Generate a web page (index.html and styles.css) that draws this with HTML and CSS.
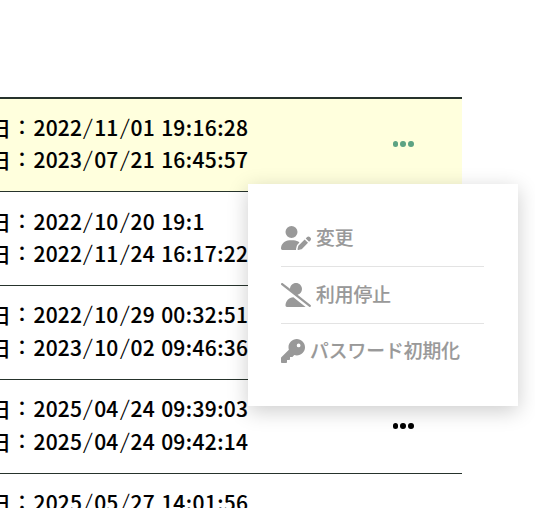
FILE: index.html
```html
<!DOCTYPE html>
<html lang="ja">
<head>
<meta charset="utf-8">
<title>ユーザー一覧</title>
<link rel="stylesheet" href="styles.css">
</head>
<body>
<main class="list">
  <section class="row active">
    <div class="dates">
      <p><span class="day">日</span><span class="sep">：</span>2022<i>/</i>11<i>/</i>01<s></s>19<b>:</b>16<b>:</b>28</p>
      <p><span class="day">日</span><span class="sep">：</span>2023<i>/</i>07<i>/</i>21<s></s>16<b>:</b>45<b>:</b>57</p>
    </div>
    <div class="dots"><span></span><span></span><span></span></div>
    <div class="menu">
      <div class="item">
        <svg class="wide" viewBox="0 0 640 512"><path d="M224 256A128 128 0 1 0 224 0a128 128 0 1 0 0 256zm-45.7 48C79.8 304 0 383.8 0 482.3C0 498.7 13.3 512 29.7 512H322.8c-3.1-8.8-3.7-18.4-1.4-27.8l15-60.1c2.8-11.3 8.6-21.5 16.8-29.7l40.3-40.3c-32.1-31-75.7-50.1-123.9-50.1H178.3zm435.5-68.3c-15.6-15.6-40.9-15.6-56.6 0l-29.4 29.4 71 71 29.4-29.4c15.6-15.6 15.6-40.9 0-56.6l-14.4-14.4zM375.9 417c-4.1 4.1-7 9.2-8.4 14.9l-15 60.1c-1.4 5.5 .2 11.2 4.2 15.2s9.7 5.6 15.2 4.2l60.1-15c5.6-1.4 10.8-4.3 14.9-8.4L576.1 358.7l-71-71L375.9 417z"/></svg>
        <span>変更</span>
      </div>
      <div class="item">
        <svg class="wide" viewBox="0 0 640 512"><path d="M38.8 5.1C28.4-3.1 13.3-1.2 5.1 9.2S-1.2 34.7 9.2 42.9l592 464c10.4 8.2 25.5 6.3 33.7-4.1s6.3-25.5-4.1-33.7L353.3 251.6C407.9 237 448 187.2 448 128C448 57.3 390.7 0 320 0C250.2 0 193.5 55.8 192 125.2L38.8 5.1zM264.3 304.3C170.5 309.4 96 387.2 96 482.3c0 16.4 13.3 29.7 29.7 29.7H514.3c3.9 0 7.6-.7 11-2.1l-261-205.6z"/></svg>
        <span>利用停止</span>
      </div>
      <div class="item">
        <svg class="square" viewBox="0 0 512 512"><path d="M336 352c97.2 0 176-78.8 176-176S433.2 0 336 0S160 78.8 160 176c0 18.7 2.9 36.8 8.3 53.7L7 391c-4.5 4.5-7 10.6-7 17v80c0 13.3 10.7 24 24 24h80c13.3 0 24-10.7 24-24V448h40c13.3 0 24-10.7 24-24V384h40c6.4 0 12.5-2.5 17-7l33.3-33.3c16.9 5.4 35 8.3 53.7 8.3zM376 96a40 40 0 1 1 0 80 40 40 0 1 1 0-80z"/></svg>
        <span>パスワード初期化</span>
      </div>
    </div>
  </section>
  <section class="row">
    <div class="dates">
      <p><span class="day">日</span><span class="sep">：</span>2022<i>/</i>10<i>/</i>20<s></s>19<b>:</b>1</p>
      <p><span class="day">日</span><span class="sep">：</span>2022<i>/</i>11<i>/</i>24<s></s>16<b>:</b>17<b>:</b>22</p>
    </div>
  </section>
  <section class="row loose">
    <div class="dates">
      <p><span class="day">日</span><span class="sep">：</span>2022<i>/</i>10<i>/</i>29<s></s>00<b>:</b>32<b>:</b>51</p>
      <p><span class="day">日</span><span class="sep">：</span>2023<i>/</i>10<i>/</i>02<s></s>09<b>:</b>46<b>:</b>36</p>
    </div>
  </section>
  <section class="row loose">
    <div class="dates">
      <p><span class="day">日</span><span class="sep">：</span>2025<i>/</i>04<i>/</i>24<s></s>09<b>:</b>39<b>:</b>03</p>
      <p><span class="day">日</span><span class="sep">：</span>2025<i>/</i>04<i>/</i>24<s></s>09<b>:</b>42<b>:</b>14</p>
    </div>
    <div class="dots"><span></span><span></span><span></span></div>
  </section>
  <section class="row loose last">
    <div class="dates">
      <p><span class="day">日</span><span class="sep">：</span>2025<i>/</i>05<i>/</i>27<s></s>14<b>:</b>01<b>:</b>56</p>
    </div>
  </section>
</main>
</body>
</html>
```

FILE: styles.css
```css
* { box-sizing: border-box; }
body {
  margin: 0;
  height: 508px;
  overflow: hidden;
  background: #fff;
  color: #000;
  font-family: "Noto Sans CJK JP", sans-serif;
}
.list {
  width: 462px;
  margin-top: 97px;
  border-top: 2px solid #26332c;
}
.row {
  position: relative;
  display: flex;
  align-items: flex-start;
  justify-content: space-between;
  height: 94px;
  padding: 13px 48px 0 0;
  border-bottom: 1px solid #26332c;
}
.row.active {
  height: 93px;
  padding-top: 12px;
  background: #ffffdd;
}
.row.loose { padding-top: 12px; }
.row.last { height: 34px; border-bottom: 0; }
.dates p {
  display: flex;
  margin: 0;
  height: 32px;
  line-height: 32px;
  font-size: 21px;
  font-weight: 500;
  letter-spacing: 0.2px;
  white-space: nowrap;
  -webkit-text-stroke: 0.12px currentColor;
}
.loose .dates p { height: 33px; }
.day { width: 13px; text-indent: -10px; }
.sep { width: 20.5px; font-size: 20px; text-indent: -1px; }
.dates i {
  width: 12px;
  font-style: normal;
  font-weight: 300;
  text-align: center;
  transform: translateY(-1px) scale(1.22, 1);
  -webkit-text-stroke: 0;
}
.dates b {
  width: 7px;
  font-weight: 500;
  text-align: center;
}
.dates s { width: 6.3px; }
.dots { display: flex; gap: 1.8px; padding-top: 30px; margin-right: 0.5px; }
.loose .dots { padding-top: 31px; }
.dots span {
  width: 5.8px;
  height: 5.8px;
  border-radius: 50%;
  background: #000;
}
.active .dots span { background: #5da383; }
.menu {
  position: absolute;
  z-index: 1;
  left: 248px;
  top: 85px;
  width: 270px;
  height: 222px;
  padding: 26px 34px 0 33px;
  background: #fff;
  box-shadow: 0 5px 20px rgba(0, 0, 0, 0.2);
  color: #999;
}
.item {
  display: flex;
  align-items: center;
  gap: 5px;
  height: 57px;
  padding-bottom: 1px;
  border-bottom: 1px solid #e3e3e3;
  font-size: 18.75px;
  font-weight: 500;
  line-height: 28px;
  white-space: nowrap;
  -webkit-text-stroke: 0.15px currentColor;
}
.item span { margin-bottom: 2px; }
.item:last-child { border-bottom: 0; padding-bottom: 3px; }
.item:last-child span { margin-bottom: 3px; }
.item svg { height: 24px; fill: currentColor; flex: none; }
.wide { width: 30px; }
.square { width: 24px; }
```
